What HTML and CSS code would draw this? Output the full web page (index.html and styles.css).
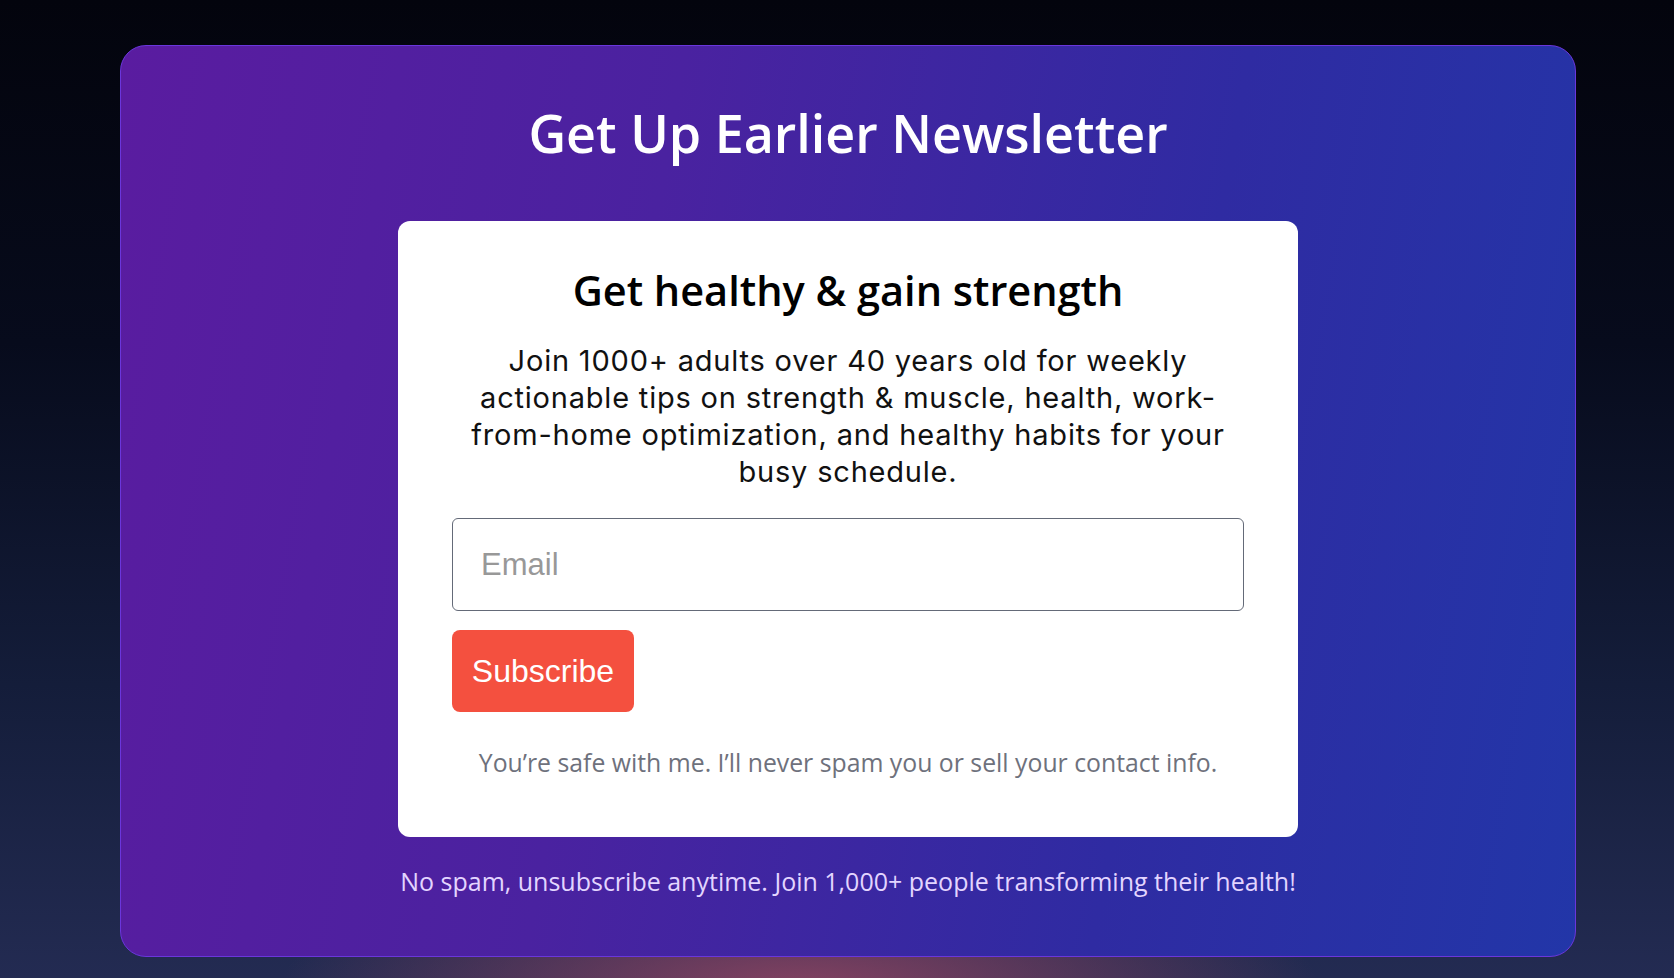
FILE: index.html
```html
<!DOCTYPE html>
<html lang="en">
<head>
<meta charset="utf-8">
<title>Get Up Earlier Newsletter</title>
<link rel="stylesheet" href="styles.css">
</head>
<body>
<main class="page">
  <section class="hero">
    <h1 class="hero-title">Get Up Earlier Newsletter</h1>
    <div class="signup-card">
      <h2 class="signup-heading">Get healthy &amp; gain strength</h2>
      <p class="signup-text">Join 1000+ adults over 40 years old for weekly actionable tips on strength &amp; muscle, health, work-from-home optimization, and healthy habits for your busy schedule.</p>
      <form class="signup-form">
        <input class="email-input" type="email" placeholder="Email">
        <button class="subscribe-btn" type="button">Subscribe</button>
      </form>
      <p class="safe-note">You’re safe with me. I’ll never spam you or sell your contact info.</p>
    </div>
    <p class="hero-footer">No spam, unsubscribe anytime. Join 1,000+ people transforming their health!</p>
  </section>
</main>
</body>
</html>
```

FILE: styles.css
```css
* { box-sizing: border-box; }

html, body {
  margin: 0;
  height: 100%;
}

body {
  background:
    radial-gradient(ellipse 520px 140px at 800px 990px, rgba(150, 70, 100, 0.85), rgba(150, 70, 100, 0) 100%),
    linear-gradient(180deg, #03040d 0%, #070b1c 35%, #141d3a 70%, #232b52 100%);
  font-family: "Open Sans", "Liberation Sans", sans-serif;
  overflow: hidden;
}

.page {
  padding: 45px 98px 0 120px;
}

.hero {
  height: 912px;
  border: 1px solid #6a36dc;
  border-radius: 26px;
  background: linear-gradient(100deg, #5a1ca0 0%, #4a22a0 35%, #2f2ba2 70%, #2236a8 100%);
  display: flex;
  flex-direction: column;
  align-items: center;
  padding-top: 56px;
}

.hero-title {
  margin: 0;
  color: #ffffff;
  font-family: "Open Sans", sans-serif;
  font-weight: 600;
  font-size: 52px;
  line-height: 62px;
}

.signup-card {
  margin-top: 57px;
  width: 900px;
  height: 616px;
  background: #ffffff;
  border-radius: 12px;
  padding: 44px 54px 0;
  display: flex;
  flex-direction: column;
  align-items: center;
  text-align: center;
}

.signup-heading {
  margin: 0;
  color: #000000;
  font-family: "Open Sans", sans-serif;
  font-weight: 600;
  font-size: 41.5px;
  line-height: 50px;
}

.signup-text {
  margin: 27px 0 0;
  color: #111111;
  font-family: "Inter", "Roboto", sans-serif;
  font-size: 29px;
  letter-spacing: 0.8px;
  line-height: 37px;
  width: 100%;
}

.signup-form {
  margin-top: 28px;
  width: 100%;
  display: flex;
  flex-direction: column;
  align-items: flex-start;
  gap: 19px;
}

.email-input {
  width: 100%;
  height: 93px;
  border: 1px solid #646a78;
  border-radius: 6px;
  padding: 0 28px;
  font-family: "Liberation Sans", Arial, sans-serif;
  font-size: 31px;
  color: #222222;
  outline: none;
}

.email-input::placeholder {
  color: #989898;
}

.subscribe-btn {
  width: 182px;
  height: 82px;
  border: none;
  border-radius: 8px;
  background: #f4503f;
  color: #ffffff;
  font-family: "Liberation Sans", Arial, sans-serif;
  font-size: 32px;
  padding: 0;
  cursor: pointer;
}

.safe-note {
  margin: 35px 0 0;
  color: #6e717c;
  font-family: "Open Sans", sans-serif;
  font-size: 24.8px;
  line-height: 30px;
}

.hero-footer {
  margin: 29px 0 0;
  color: #e3d5ff;
  font-family: "Open Sans", sans-serif;
  font-size: 25px;
  line-height: 30px;
}
```
